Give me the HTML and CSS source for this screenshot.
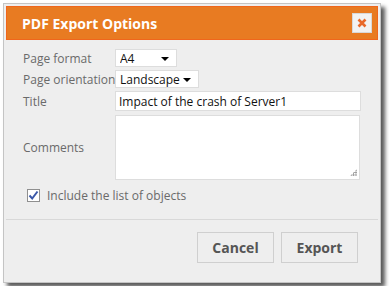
FILE: index.html
```html
<!DOCTYPE html>
<html lang="en">
<head>
  <meta charset="UTF-8">
  <title>PDF Export Options</title>
  <link rel="stylesheet" href="styles.css">
</head>
<body>
  <div class="dialog">
    <div class="dialog-header">
      <span class="dialog-title">PDF Export Options</span>
      <button class="close-btn" type="button">
        <svg width="10" height="10" viewBox="0 0 10 10">
          <path d="M1.5 1.5 L8.5 8.5 M8.5 1.5 L1.5 8.5" stroke="#e8692a" stroke-width="2.6"/>
        </svg>
      </button>
    </div>

    <form class="dialog-body">
      <div class="form-grid">
        <label class="field-label">Page format</label>
        <span class="select-wrap select-small">
          <select><option>A4</option></select>
        </span>

        <label class="field-label">Page orientation</label>
        <span class="select-wrap select-wide">
          <select><option>Landscape</option></select>
        </span>

        <label class="field-label">Title</label>
        <input class="text-input" type="text" value="Impact of the crash of Server1">

        <label class="field-label">Comments</label>
        <div class="comments-wrap">
          <textarea class="comments"></textarea>
          <span class="grip"></span>
        </div>
      </div>

      <label class="check-row">
        <span class="check-box">
          <svg width="11" height="11" viewBox="0 0 11 11">
            <path d="M1.5 5.5 L4.2 8.5 L9.5 1.5" fill="none" stroke="#3a57a8" stroke-width="2"/>
          </svg>
        </span>
        Include the list of objects
      </label>
    </form>

    <div class="dialog-footer">
      <button class="btn" type="button">Cancel</button>
      <button class="btn" type="button">Export</button>
    </div>
  </div>
</body>
</html>
```

FILE: styles.css
```css
* {
  box-sizing: border-box;
}
body {
  margin: 0;
  background: #fff;
  font-family: 'Open Sans', sans-serif;
  font-size: 12px;
  color: #6a6a6a;
}
.dialog {
  margin: 3px;
  width: 378px;
  height: 280px;
  padding: 2px;
  background: #eeeeee;
  border: 1px solid #c4c4c4;
  box-shadow: 4px 4px 4px rgba(0, 0, 0, 0.65);
  display: flex;
  flex-direction: column;
}
.dialog-header {
  height: 34px;
  background: #e87b22;
  border: 1px solid #f0661c;
  display: flex;
  align-items: center;
  justify-content: space-between;
  padding: 0 5px 0 15px;
}
.dialog-title {
  color: #fff;
  font-weight: bold;
  font-size: 14px;
}
.close-btn {
  width: 20px;
  height: 20px;
  padding: 0;
  background: #f2f2f2;
  border: 1px solid #d8d8d8;
  display: flex;
  align-items: center;
  justify-content: center;
  cursor: pointer;
}
.dialog-body {
  margin: 0;
  padding: 9px 0 0 17px;
}
.form-grid {
  display: grid;
  grid-template-columns: 92px 246px;
  row-gap: 3px;
  align-items: center;
}
.field-label {
  white-space: nowrap;
}
.select-wrap {
  position: relative;
  display: inline-block;
  height: 18px;
  background: #fff;
  border: 1px solid #ddd;
}
.select-wrap::after {
  content: "";
  position: absolute;
  right: 7px;
  top: 7px;
  border-left: 4px solid transparent;
  border-right: 4px solid transparent;
  border-top: 4px solid #000;
  pointer-events: none;
}
.select-small {
  width: 62px;
}
.select-wide {
  width: 84px;
}
.select-wrap select {
  appearance: none;
  -webkit-appearance: none;
  border: none;
  background: transparent;
  width: 100%;
  height: 16px;
  padding: 0 0 0 4px;
  font-family: inherit;
  font-size: 12px;
  color: #111;
  outline: none;
}
.text-input {
  width: 246px;
  height: 20px;
  border: 1px solid #ddd;
  background: #fff;
  padding: 0 3px;
  font-family: inherit;
  font-size: 12px;
  color: #111;
  outline: none;
}
.comments-wrap {
  position: relative;
  margin-top: 1px;
  height: 65px;
}
.comments {
  display: block;
  width: 245px;
  height: 65px;
  border: 1px solid #ddd;
  background: #fff;
  font-family: inherit;
  font-size: 12px;
  outline: none;
  resize: none;
}
.grip {
  position: absolute;
  right: 4px;
  bottom: 4px;
  width: 7px;
  height: 7px;
  background:
    radial-gradient(circle, #999 0.8px, transparent 1px) 0 0 / 2.4px 2.4px;
  clip-path: polygon(100% 0, 100% 100%, 0 100%);
}
.check-row {
  display: flex;
  align-items: center;
  gap: 7px;
  margin: 7px 0 0 4px;
}
.check-box {
  width: 13px;
  height: 13px;
  border: 1px solid #8f8f8f;
  background: #fff;
  display: flex;
  align-items: center;
  justify-content: center;
}
.dialog-footer {
  margin-top: auto;
  border-top: 1px solid #d8d8d8;
  height: 61px;
  display: flex;
  justify-content: flex-end;
  align-items: flex-start;
  gap: 7px;
  padding: 12px 20px 0 0;
}
.btn {
  width: 77px;
  height: 31px;
  background: #eeeeee;
  border: 1px solid #cfcfcf;
  color: #555;
  font-family: inherit;
  font-weight: bold;
  font-size: 14px;
  cursor: pointer;
}
```
